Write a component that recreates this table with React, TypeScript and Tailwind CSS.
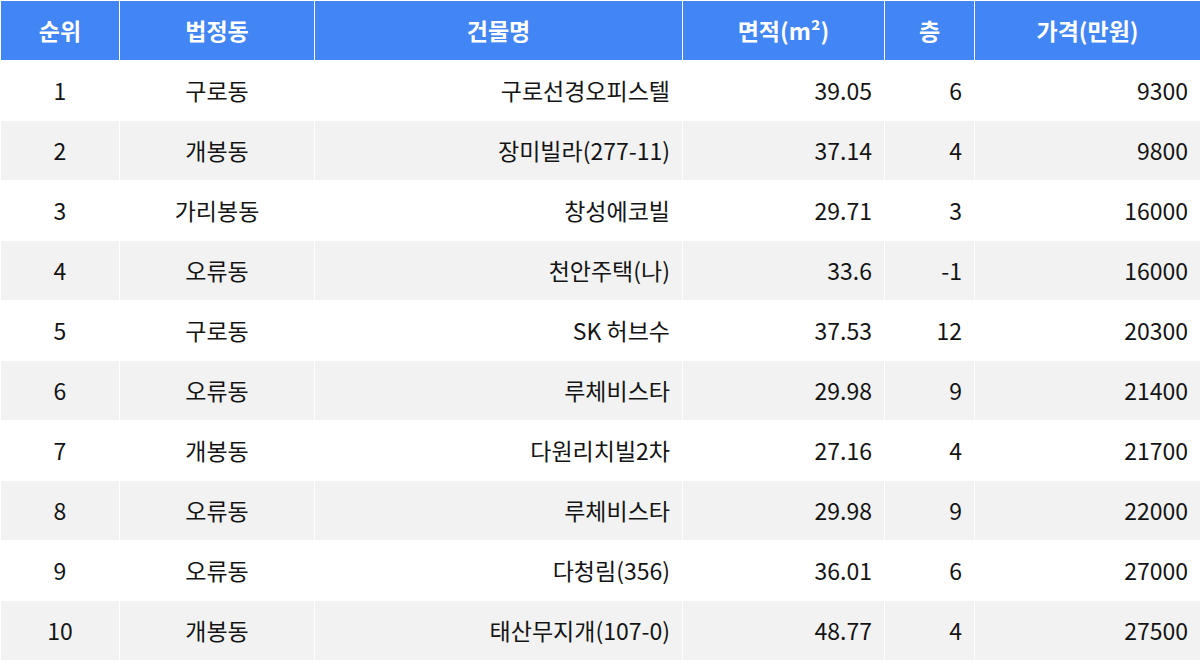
const headers = ['순위', '법정동', '건물명', '면적(m²)', '층', '가격(만원)'];

const rows: [number, string, string, string, string, string][] = [
  [1, '구로동', '구로선경오피스텔', '39.05', '6', '9300'],
  [2, '개봉동', '장미빌라(277-11)', '37.14', '4', '9800'],
  [3, '가리봉동', '창성에코빌', '29.71', '3', '16000'],
  [4, '오류동', '천안주택(나)', '33.6', '-1', '16000'],
  [5, '구로동', 'SK 허브수', '37.53', '12', '20300'],
  [6, '오류동', '루체비스타', '29.98', '9', '21400'],
  [7, '개봉동', '다원리치빌2차', '27.16', '4', '21700'],
  [8, '오류동', '루체비스타', '29.98', '9', '22000'],
  [9, '오류동', '다청림(356)', '36.01', '6', '27000'],
  [10, '개봉동', '태산무지개(107-0)', '48.77', '4', '27500'],
];

export default function App() {
  return (
    <div
      className="w-[1200px] h-[661px] bg-white pt-px pl-px"
      style={{ fontFamily: '"Noto Sans CJK KR", "Noto Sans", sans-serif' }}
    >
      <div className="grid grid-cols-[118px_194px_367px_201px_89px_225px] auto-rows-[59px] gap-px text-[23px] text-[#141414]">
        {headers.map((h) => (
          <div key={h} className="flex items-center justify-center bg-[#4285f4] font-bold text-white">
            {h}
          </div>
        ))}
        {rows.map((r, i) => {
          const bg = i % 2 === 1 ? 'bg-[#f2f2f2]' : 'bg-white';
          return [
            <div key={`${i}-a`} className={`${bg} flex items-center justify-center`}>{r[0]}</div>,
            <div key={`${i}-b`} className={`${bg} flex items-center justify-center`}>{r[1]}</div>,
            <div key={`${i}-c`} className={`${bg} flex items-center justify-end pr-3`}>{r[2]}</div>,
            <div key={`${i}-d`} className={`${bg} flex items-center justify-end pr-3`}>{r[3]}</div>,
            <div key={`${i}-e`} className={`${bg} flex items-center justify-end pr-3`}>{r[4]}</div>,
            <div key={`${i}-f`} className={`${bg} flex items-center justify-end pr-3`}>{r[5]}</div>,
          ];
        })}
      </div>
    </div>
  );
}
